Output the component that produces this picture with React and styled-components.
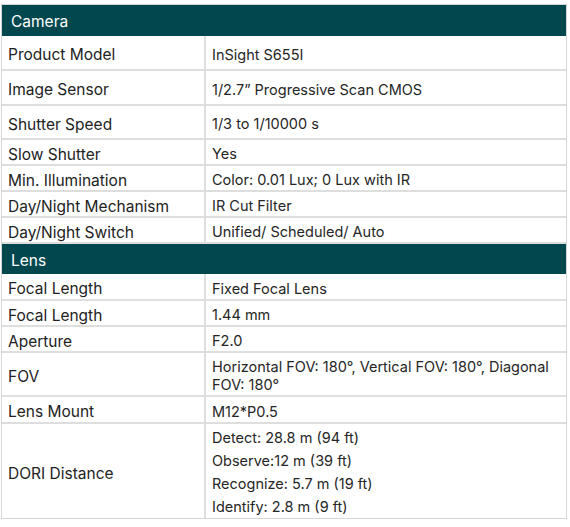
import React from "react";
import styled, { createGlobalStyle } from "styled-components";

const GlobalStyle = createGlobalStyle`
  body {
    margin: 0;
    background: #ffffff;
    font-family: Inter, "Liberation Sans", Arial, sans-serif;
  }
`;

const Page = styled.div`
  padding: 4px 2px 0 1px;
  width: 569px;
  box-sizing: border-box;
`;

const Table = styled.div`
  border: 1px solid #d6d6d6;
  display: flex;
  flex-direction: column;
`;

const SectionHeader = styled.div`
  height: ${(p) => p.h}px;
  background: #02474e;
  color: #ffffff;
  font-size: 15.5px;
  display: flex;
  align-items: center;
  padding: 2px 0 0 9px;
  box-sizing: border-box;
`;

const Row = styled.div`
  display: grid;
  grid-template-columns: 204px 1fr;
  min-height: ${(p) => p.h}px;
  border-bottom: 2px solid #dedede;
  box-sizing: border-box;
  &:last-child {
    border-bottom: none;
  }
`;

const Label = styled.div`
  display: flex;
  align-items: center;
  padding: 4px 0 0 6px;
  font-size: 15.5px;
  color: #222222;
  border-right: 2px solid #dedede;
`;

const Value = styled.div`
  display: flex;
  flex-direction: column;
  justify-content: center;
  padding: ${(p) => (p.pt != null ? p.pt : 4)}px 10px 0 6px;
  font-size: 14.5px;
  color: #262626;
  line-height: ${(p) => p.lh || 18}px;
`;

const camera = [
  ["Product Model", "InSight S655I", 35],
  ["Image Sensor", "1/2.7\u201d Progressive Scan CMOS", 35],
  ["Shutter Speed", "1/3 to 1/10000 s", 34],
  ["Slow Shutter", "Yes", 26],
  ["Min. Illumination", "Color: 0.01 Lux; 0 Lux with IR", 26],
  ["Day/Night Mechanism", "IR Cut Filter", 26],
  ["Day/Night Switch", "Unified/ Scheduled/ Auto", 26],
];

const lens = [
  ["Focal Length", "Fixed Focal Lens", 27],
  ["Focal Length", "1.44 mm", 26],
  ["Aperture", "F2.0", 26],
  ["FOV", "Horizontal FOV: 180\u00b0, Vertical FOV: 180\u00b0, Diagonal FOV: 180\u00b0", 44],
  ["Lens Mount", "M12*P0.5", 27],
];

const dori = [
  "Detect: 28.8 m (94 ft)",
  "Observe:12 m (39 ft)",
  "Recognize: 5.7 m (19 ft)",
  "Identify: 2.8 m (9 ft)",
];

export default function App() {
  return (
    <Page>
      <GlobalStyle />
      <Table>
        <SectionHeader h={31}>Camera</SectionHeader>
        {camera.map(([k, v, h]) => (
          <Row key={k} h={h}>
            <Label>{k}</Label>
            <Value>{v}</Value>
          </Row>
        ))}
        <SectionHeader h={30}>Lens</SectionHeader>
        {lens.map(([k, v, h], i) => (
          <Row key={k + i} h={h}>
            <Label>{k}</Label>
            <Value>{v}</Value>
          </Row>
        ))}
        <Row h={94}>
          <Label>DORI Distance</Label>
          <Value lh={23} pt={2}>
            {dori.map((d) => (
              <span key={d}>{d}</span>
            ))}
          </Value>
        </Row>
      </Table>
    </Page>
  );
}
